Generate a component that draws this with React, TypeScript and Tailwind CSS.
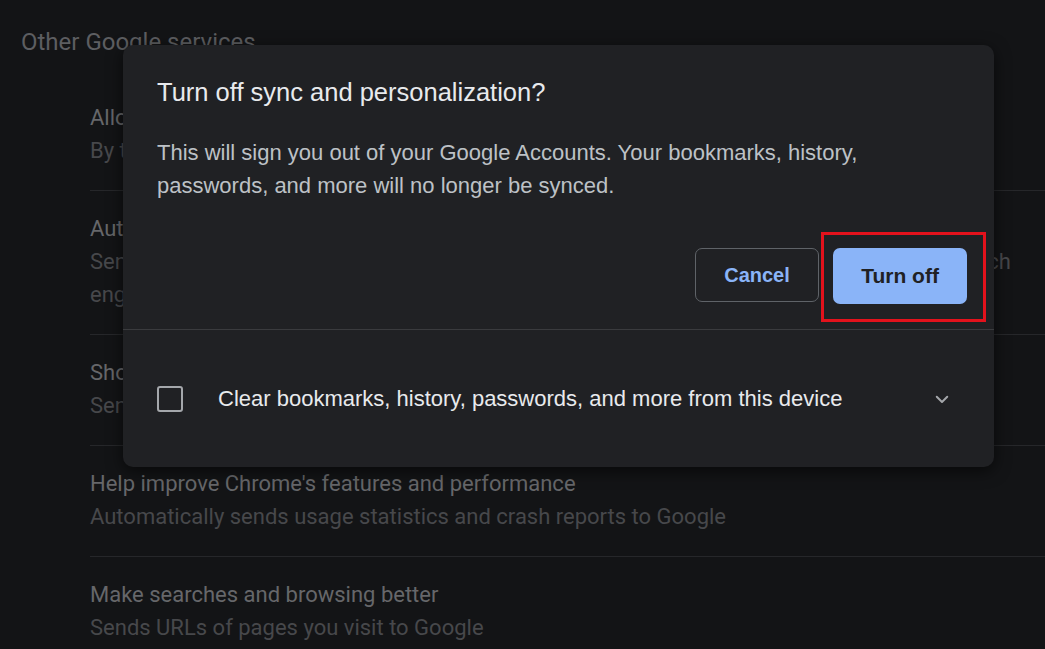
import React from 'react';

interface SettingRowProps {
  title: string;
  lines: string[];
  divider?: boolean;
}

function SettingRow({ title, lines, divider = true }: SettingRowProps) {
  return (
    <div className={divider ? "border-b border-[#26272a] pt-[21px] pb-[23px]" : "pt-[21px] pb-[23px]"}>
      <div className="text-[22px] leading-[33px] text-[#66676a] whitespace-nowrap">{title}</div>
      {lines.map((line) => (
        <div key={line} className="text-[22px] leading-[33px] text-[#47484b] whitespace-nowrap">
          {line}
        </div>
      ))}
    </div>
  );
}

export default function App() {
  return (
    <div className="relative w-[1045px] h-[649px] overflow-hidden bg-[#131416] font-['Roboto',sans-serif]">
      {/* Settings page behind the dialog */}
      <div className="pt-[28px]">
        <h2 className="pl-[21px] text-[24px] leading-[28px] text-[#5d5e61]">Other Google services</h2>
        <div className="pl-[90px] mt-[24px]">
          <SettingRow
            title="Allow Chrome sign-in"
            lines={["By turning this off, you can sign in to Google sites like Gmail without signing in"]}
          />
          <SettingRow
            title="Autocomplete searches and URLs"
            lines={[
              "Sends some cookies and searches from the address bar and search box to your default search",
              "engine",
            ]}
          />
          <SettingRow
            title="Show suggestions for similar pages when a page can't be found"
            lines={["Sends the web address of the page you're trying to reach to Google"]}
          />
          <SettingRow
            title="Help improve Chrome's features and performance"
            lines={["Automatically sends usage statistics and crash reports to Google"]}
          />
          <SettingRow
            title="Make searches and browsing better"
            lines={["Sends URLs of pages you visit to Google"]}
            divider={false}
          />
        </div>
      </div>

      {/* Dialog */}
      <div className="absolute left-[123px] top-[45px] w-[871px] h-[422px] rounded-[10px] bg-[#202124] shadow-[0_4px_16px_rgba(0,0,0,0.6)] font-['Liberation_Sans',Arial,sans-serif] flex flex-col">
        <div className="px-[34px] pt-[33px] pb-[25px] border-b border-[#3a3b3e]">
          <h1 className="text-[25.5px] leading-[28px] text-[#e8eaed]">Turn off sync and personalization?</h1>
          <p className="mt-[30px] text-[22px] leading-[33px] text-[#bdc1c6] whitespace-nowrap">
            This will sign you out of your Google Accounts. Your bookmarks, history,
            <br />
            passwords, and more will no longer be synced.
          </p>
          <div className="mt-[46px] flex justify-end gap-[14px] mr-[-7px]">
            <button className="w-[124px] h-[54px] rounded-[7px] border border-[#5f6368] text-[20px] font-bold text-[#8ab4f8]">
              Cancel
            </button>
            <div className="relative">
              <button className="w-[134px] h-[56px] rounded-[7px] bg-[#8ab4f8] text-[21px] font-bold text-[#202124]">
                Turn off
              </button>
              <div className="absolute -left-[12px] -right-[19px] -top-[16px] -bottom-[18px] border-[3px] border-[#e3121c]" />
            </div>
          </div>
        </div>
        <div className="flex-1 flex items-center pl-[34px] pr-[43px]">
          <div className="w-[26px] h-[26px] rounded-[3px] border-[2px] border-[#a4a7ab]" />
          <span className="ml-[35px] flex-1 text-[22px] text-[#e8eaed] whitespace-nowrap">
            Clear bookmarks, history, passwords, and more from this device
          </span>
          <svg width="18" height="18" viewBox="0 0 24 24" fill="none" stroke="#a4a7ab" strokeWidth="2.6" strokeLinecap="round" strokeLinejoin="round">
            <path d="M5 9l7 7 7-7" />
          </svg>
        </div>
      </div>
    </div>
  );
}
